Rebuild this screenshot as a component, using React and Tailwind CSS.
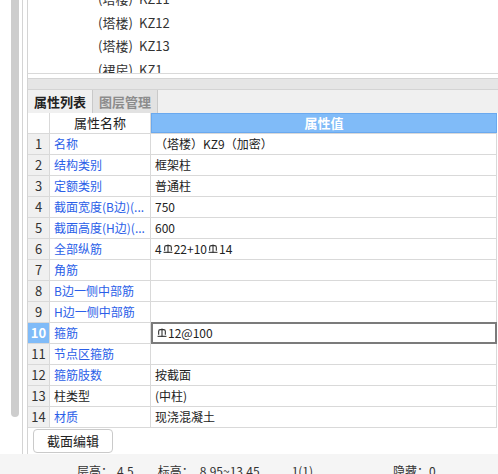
import React from 'react';

const font = { fontFamily: '"Noto Sans CJK SC", "Noto Sans", sans-serif' };

function Steel() {
  // HRB400 rebar grade mark
  return (
    <svg className="inline-block w-[10px] h-[10px] align-[4px] mx-[1px]" viewBox="0 0 9 9" fill="none" stroke="#333" strokeWidth="1">
      <path d="M1.5 6 V3 Q1.5 1.5 3 1.5 H6 Q7.5 1.5 7.5 3 V6" />
      <path d="M4.5 0.5 V8" />
      <path d="M0.5 7.5 H8.5" />
    </svg>
  );
}

const rows = [
  { name: '名称', value: '（塔楼）KZ9（加密）' },
  { name: '结构类别', value: '框架柱' },
  { name: '定额类别', value: '普通柱' },
  { name: '截面宽度(B边)(...', value: '750' },
  { name: '截面高度(H边)(...', value: '600' },
  { name: '全部纵筋', value: (<>4<Steel />22+10<Steel />14</>) },
  { name: '角筋', value: '' },
  { name: 'B边一侧中部筋', value: '' },
  { name: 'H边一侧中部筋', value: '' },
  { name: '箍筋', value: (<><Steel />12@100</>), editing: true },
  { name: '节点区箍筋', value: '' },
  { name: '箍筋肢数', value: '按截面' },
  { name: '柱类型', value: '(中柱)', plain: true },
  { name: '材质', value: '现浇混凝土' },
];

const listItems = [
  ['(塔楼)', 'KZ11'],
  ['(塔楼)', 'KZ12'],
  ['(塔楼)', 'KZ13'],
  ['(裙房)', 'KZ1'],
];

export default function App() {
  return (
    <div className="w-[498px] h-[474px] overflow-hidden bg-white flex flex-col text-[12px] text-[#222]" style={font}>
      <div className="h-[455px] flex">
        {/* left edge + scrollbar */}
        <div className="w-[11px]" />
        <div className="w-[8px] h-[417px] bg-[#cdcdcd] rounded-b-[4px]" />
        <div className="w-[3px]" />

        {/* panel */}
        <div className="flex-1 border-l border-[#d4d4d4] pl-[4px] h-[454px]">
          <div className="h-full border-l border-[#d4d4d4] flex flex-col">
            {/* element list */}
            <div className="h-[74px] border-b border-[#d9d9d9] overflow-hidden shrink-0">
              <div className="-mt-[13px]">
                {listItems.map(([a, b], i) => (
                  <div key={i} className="h-[23.5px] flex items-center pl-[70px] text-[13px] text-[#333]">
                    <span className="w-[41px]">{a}</span>
                    <span>{b}</span>
                  </div>
                ))}
              </div>
            </div>
            <div className="h-[4px] shrink-0" />
            <div className="h-[12px] bg-[#e6e6e6] border-y border-[#d4d4d4] shrink-0" />

            {/* tabs */}
            <div className="h-[23px] bg-[#f0f0f0] flex shrink-0">
              <div className="w-[65px] border-r border-[#c9c9c9] flex items-center justify-center font-bold text-[13px] text-[#222]">
                属性列表
              </div>
              <div className="w-[65px] bg-[#e2e2e2] border-r border-[#c9c9c9] flex items-center justify-center font-bold text-[13px] text-[#8c8c8c]">
                图层管理
              </div>
            </div>

            {/* property grid */}
            <div className="w-[469px] shrink-0">
              <div className="flex h-[21px] border-b border-[#d9d9d9]">
                <div className="w-[22px] border-r border-[#d9d9d9]" />
                <div className="w-[101px] border-r border-[#d9d9d9] flex items-center justify-center text-[13px]">属性名称</div>
                <div className="w-[346px] bg-[#80bbf8] border border-[#6aa9ef] flex items-center justify-center text-[13px] font-bold text-white">属性值</div>
              </div>
              {rows.map((r, i) => (
                <div key={i} className="flex h-[21px] border-b border-[#d9d9d9]">
                  <div
                    className={`w-[22px] border-r border-[#d9d9d9] flex items-center justify-center text-[13px] ${
                      r.editing ? 'bg-[#80bbf8] text-white font-bold' : 'bg-[#f0f0f0] text-[#333]'
                    }`}
                  >
                    {i + 1}
                  </div>
                  <div className={`w-[101px] border-r border-[#d9d9d9] flex items-center pl-[4px] pr-[2px] whitespace-nowrap overflow-hidden ${r.plain ? 'text-[#222]' : 'text-[#2a5ee8]'}`}>
                    {r.name}
                  </div>
                  <div
                    className={`w-[346px] flex items-center whitespace-nowrap ${
                      r.editing ? 'border-2 border-[#7b7b7b] pl-[3px] -mt-px h-[22px]' : 'border-r border-[#d9d9d9] pl-[4px]'
                    }`}
                  >
                    {r.value}
                  </div>
                </div>
              ))}
            </div>

            <div className="pt-[1px] pl-[5px]">
              <button className="w-[80px] h-[24px] bg-white border border-[#cacaca] rounded-[4px] text-[13px] text-[#222]">
                截面编辑
              </button>
            </div>
          </div>
        </div>
      </div>

      {/* status bar */}
      <div className="flex-1 bg-[#f5f5f5] pt-[8px] text-[12px] text-[#333] flex whitespace-nowrap">
        <span className="ml-[77px]">层高：</span>
        <span className="ml-[4px]">4.5</span>
        <span className="ml-[24px]">标高：</span>
        <span className="ml-[6px]">8.95~13.45</span>
        <span className="ml-[32px]">1(1)</span>
        <span className="ml-[80px]">隐藏：0</span>
      </div>
    </div>
  );
}
